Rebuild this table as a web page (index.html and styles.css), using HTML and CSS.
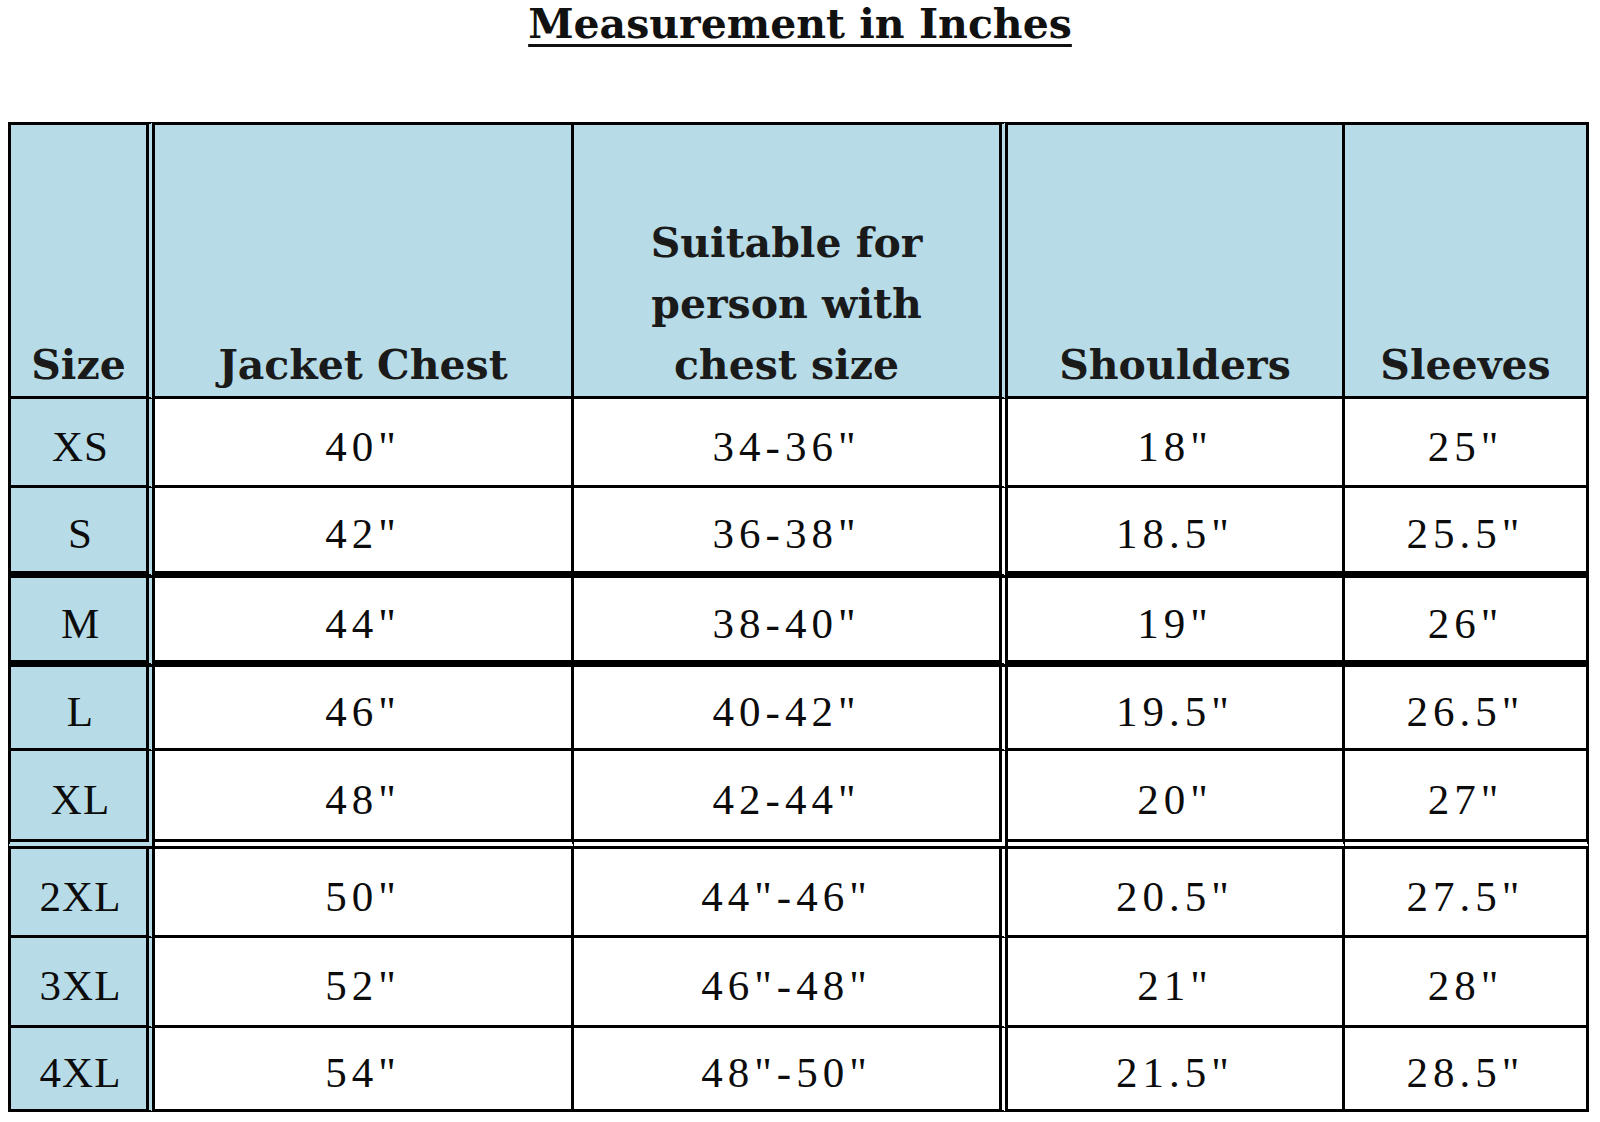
FILE: index.html
```html
<!DOCTYPE html>
<html lang="en">
<head>
<meta charset="utf-8">
<title>Measurement in Inches</title>
<link rel="stylesheet" href="styles.css">
</head>
<body>
<h1 class="title"><span class="title-text">Measurement in Inches</span></h1>
<table class="chart">
  <colgroup>
    <col class="c-size">
    <col class="c-jacket">
    <col class="c-suit">
    <col class="c-shoulder">
    <col class="c-sleeve">
  </colgroup>
  <thead>
    <tr class="head">
      <th class="size">Size</th>
      <th>Jacket Chest</th>
      <th class="dbl">Suitable for<br>person with<br>chest size</th>
      <th>Shoulders</th>
      <th>Sleeves</th>
    </tr>
  </thead>
  <tbody>
    <tr class="r-xs"><td class="size">XS</td><td>40"</td><td class="dbl">34-36"</td><td>18"</td><td>25"</td></tr>
    <tr class="r-s thick"><td class="size">S</td><td>42"</td><td class="dbl">36-38"</td><td>18.5"</td><td>25.5"</td></tr>
    <tr class="r-m thick"><td class="size">M</td><td>44"</td><td class="dbl">38-40"</td><td>19"</td><td>26"</td></tr>
    <tr class="r-l"><td class="size">L</td><td>46"</td><td class="dbl">40-42"</td><td>19.5"</td><td>26.5"</td></tr>
    <tr class="r-xl double"><td class="size">XL</td><td>48"</td><td class="dbl">42-44"</td><td>20"</td><td>27"</td></tr>
    <tr class="r-2xl"><td class="size">2XL</td><td>50"</td><td class="dbl">44"-46"</td><td>20.5"</td><td>27.5"</td></tr>
    <tr class="r-3xl"><td class="size">3XL</td><td>52"</td><td class="dbl">46"-48"</td><td>21"</td><td>28"</td></tr>
    <tr class="r-4xl"><td class="size">4XL</td><td>54"</td><td class="dbl">48"-50"</td><td>21.5"</td><td>28.5"</td></tr>
  </tbody>
</table>
</body>
</html>
```
FILE: styles.css
```css
html, body {
  margin: 0;
  padding: 0;
  background: #ffffff;
}

body {
  width: 1600px;
  color: #141414;
}

.title {
  margin: 0 0 74px 0;
  height: 48px;
  font-family: "DejaVu Serif", "Liberation Serif", serif;
  font-weight: bold;
  font-size: 41px;
  line-height: 48px;
  text-align: center;
  color: #111111;
}

.title-text {
  text-decoration: underline;
  text-decoration-thickness: 3px;
  text-underline-offset: 6px;
}

.chart {
  margin-left: 8px;
  border-collapse: separate;
  border-spacing: 0;
  table-layout: fixed;
  width: 1581px;
}

.c-size { width: 147px; }
.c-jacket { width: 419px; }
.c-suit { width: 434px; }
.c-shoulder { width: 337px; }
.c-sleeve { width: 244px; }

.chart th,
.chart td {
  box-sizing: border-box;
  padding: 0;
  text-align: center;
  border-right: 3px solid #000;
  border-bottom: 3px solid #000;
}

.chart .size {
  border-left: 3px solid #000;
  border-right: 9px double #000;
  background: #b7dce7;
}

.chart .dbl {
  border-right: 9px double #000;
}

.head th {
  height: 277px;
  border-top: 3px solid #000;
  background: #b7dce7;
  vertical-align: bottom;
  font-family: "DejaVu Serif", "Liberation Serif", serif;
  font-weight: bold;
  font-size: 41px;
  line-height: 61px;
  color: #1a1a1a;
  padding-bottom: 0;
}

.chart td {
  font-family: "Liberation Serif", "DejaVu Serif", serif;
  font-size: 43px;
  letter-spacing: 5px;
  color: #0c0c0c;
  vertical-align: middle;
  padding-top: 8px;
  background: #ffffff;
}

.chart td.size {
  background: #b7dce7;
  letter-spacing: 1px;
  padding-left: 4px;
}

.r-xs td { height: 89px; }
.r-s td { height: 90px; }
.r-m td { height: 89px; }
.r-l td { height: 84px; }
.r-xl td { height: 98px; }
.r-2xl td { height: 89px; }
.r-3xl td { height: 90px; }
.r-4xl td { height: 84px; }

.thick td {
  border-bottom-width: 7px;
}

.double td {
  border-bottom: 10px double #000;
  padding-bottom: 0;
}
```
